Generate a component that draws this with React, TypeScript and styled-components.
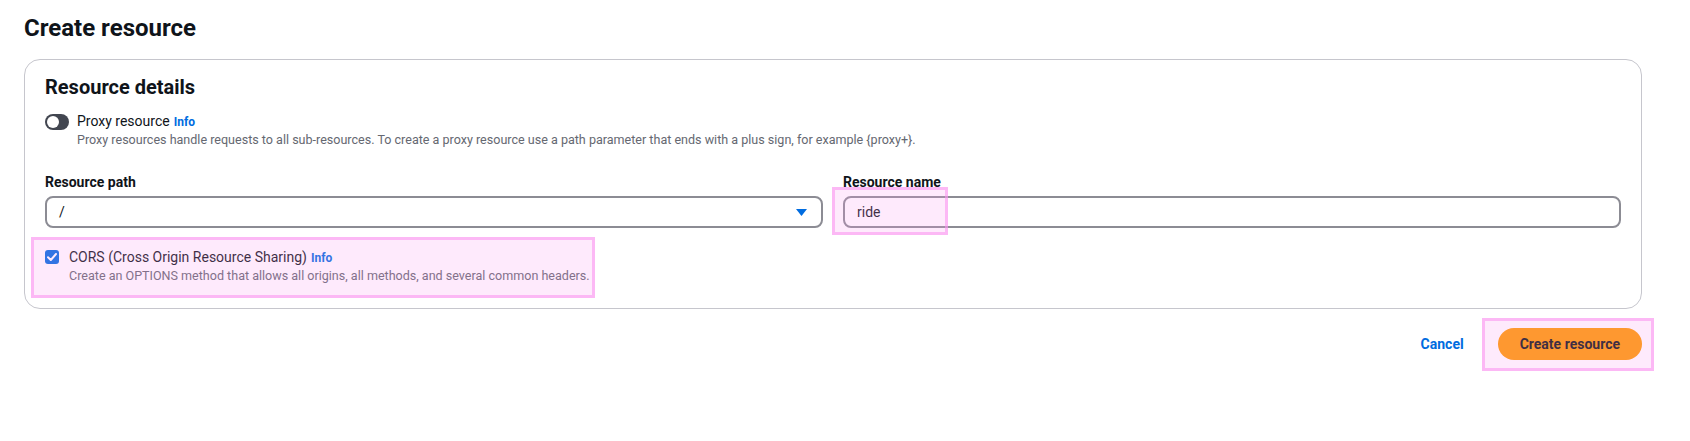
import React from "react";
import styled, { createGlobalStyle } from "styled-components";

const GlobalStyle = createGlobalStyle`
  html, body {
    margin: 0;
    padding: 0;
    background: #ffffff;
  }
  body {
    font-family: Roboto, "Liberation Sans", Arial, sans-serif;
    color: #0f141a;
    -webkit-font-smoothing: antialiased;
  }
  * {
    box-sizing: border-box;
  }
`;

const Page = styled.div`
  padding: 13px 48px 40px 24px;
`;

const Title = styled.h1`
  margin: 0 0 16px 0;
  font-size: 24px;
  line-height: 30px;
  font-weight: 700;
  color: #0f141a;
`;

const Card = styled.section`
  border: 1px solid #c6c6cd;
  border-radius: 16px;
  padding: 15px 20px 24px 20px;
`;

const CardTitle = styled.h2`
  margin: 0;
  font-size: 20px;
  line-height: 24px;
  font-weight: 700;
  color: #0f141a;
`;

const OptionRow = styled.div<{ $mt: number; $gap: number }>`
  display: flex;
  align-items: flex-start;
  gap: ${(p) => p.$gap}px;
  margin-top: ${(p) => p.$mt}px;
`;

const ToggleTrack = styled.span`
  flex: none;
  position: relative;
  width: 24px;
  height: 16px;
  margin-top: 2px;
  border-radius: 8px;
  background: #424650;
`;

const ToggleKnob = styled.span`
  position: absolute;
  left: 2px;
  top: 2px;
  width: 12px;
  height: 12px;
  border-radius: 50%;
  background: #ffffff;
`;

const CheckBox = styled.span`
  flex: none;
  display: flex;
  align-items: center;
  justify-content: center;
  width: 14px;
  height: 14px;
  margin-top: 2px;
  border-radius: 3px;
  background: #006ce0;
`;

const OptionText = styled.div`
  display: flex;
  flex-direction: column;
`;

const OptionLabel = styled.div`
  font-size: 14px;
  line-height: 18px;
  color: #0f141a;
`;

const InfoLink = styled.span`
  margin-left: 4px;
  font-size: 12px;
  font-weight: 700;
  color: #006ce0;
`;

const Description = styled.div`
  margin-top: 1px;
  font-size: 12.55px;
  line-height: 16px;
  color: #656871;
`;

const FieldGrid = styled.div`
  display: grid;
  grid-template-columns: 1fr 1fr;
  column-gap: 20px;
  margin-top: 24px;
`;

const Field = styled.div`
  display: flex;
  flex-direction: column;
  gap: 4px;
`;

const FieldLabel = styled.label`
  font-size: 14px;
  line-height: 20px;
  font-weight: 700;
  color: #0f141a;
`;

const InputBox = styled.div`
  position: relative;
  display: flex;
  align-items: center;
  justify-content: space-between;
  height: 32px;
  padding: 0 14px 0 12px;
  border: 2px solid #8c8c94;
  border-radius: 8px;
  background: #ffffff;
  font-size: 14px;
  color: #0f141a;
`;

const Anchor = styled.div`
  position: relative;
`;

const Highlight = styled.div<{ $l: number; $t: number; $r: number; $b: number }>`
  position: absolute;
  left: ${(p) => p.$l}px;
  top: ${(p) => p.$t}px;
  right: ${(p) => p.$r}px;
  bottom: ${(p) => p.$b}px;
  border: 3px solid rgba(250, 150, 240, 0.6);
  background: rgba(250, 150, 240, 0.2);
  pointer-events: none;
`;

const Actions = styled.div`
  display: flex;
  justify-content: flex-end;
  align-items: center;
  gap: 14px;
  margin-top: 19px;
`;

const LinkButton = styled.button`
  border: none;
  background: none;
  padding: 4px 20px;
  font-family: inherit;
  font-size: 14px;
  line-height: 20px;
  font-weight: 700;
  color: #006ce0;
`;

const PrimaryButton = styled.button`
  height: 32px;
  padding: 0 22px;
  border: none;
  border-radius: 20px;
  background: #ff9900;
  font-family: inherit;
  font-size: 14px;
  font-weight: 700;
  color: #0f141a;
`;

export default function App() {
  return (
    <>
      <GlobalStyle />
      <Page>
        <Title>Create resource</Title>
        <Card>
          <CardTitle>Resource details</CardTitle>
          <OptionRow $mt={13} $gap={8}>
            <ToggleTrack>
              <ToggleKnob />
            </ToggleTrack>
            <OptionText>
              <OptionLabel>
                Proxy resource<InfoLink>Info</InfoLink>
              </OptionLabel>
              <Description>
                Proxy resources handle requests to all sub-resources. To create a proxy resource use a path parameter
                that ends with a plus sign, for example {"{proxy+}"}.
              </Description>
            </OptionText>
          </OptionRow>
          <FieldGrid>
            <Field>
              <FieldLabel>Resource path</FieldLabel>
              <InputBox>
                <span>/</span>
                <svg width="11" height="7" viewBox="0 0 11 7">
                  <path d="M0 0 H11 L5.5 7 Z" fill="#006ce0" />
                </svg>
              </InputBox>
            </Field>
            <Field>
              <FieldLabel>Resource name</FieldLabel>
              <InputBox>
                <span>ride</span>
                <Highlight $l={-13} $t={-11} $r={671} $b={-9} />
              </InputBox>
            </Field>
          </FieldGrid>
          <Anchor>
            <OptionRow $mt={20} $gap={10}>
              <CheckBox>
                <svg width="10" height="8" viewBox="0 0 10 8">
                  <path d="M1 4.2 L3.8 7 L9 1" stroke="#ffffff" strokeWidth="2" fill="none" strokeLinecap="round" strokeLinejoin="round" />
                </svg>
              </CheckBox>
              <OptionText>
                <OptionLabel>
                  CORS (Cross Origin Resource Sharing)<InfoLink>Info</InfoLink>
                </OptionLabel>
                <Description>
                  Create an OPTIONS method that allows all origins, all methods, and several common headers.
                </Description>
              </OptionText>
            </OptionRow>
            <Highlight $l={-14} $t={-11} $r={1026} $b={-14} />
          </Anchor>
        </Card>
        <Actions>
          <LinkButton>Cancel</LinkButton>
          <Anchor>
            <PrimaryButton>Create resource</PrimaryButton>
            <Highlight $l={-16} $t={-10} $r={-12} $b={-11} />
          </Anchor>
        </Actions>
      </Page>
    </>
  );
}
